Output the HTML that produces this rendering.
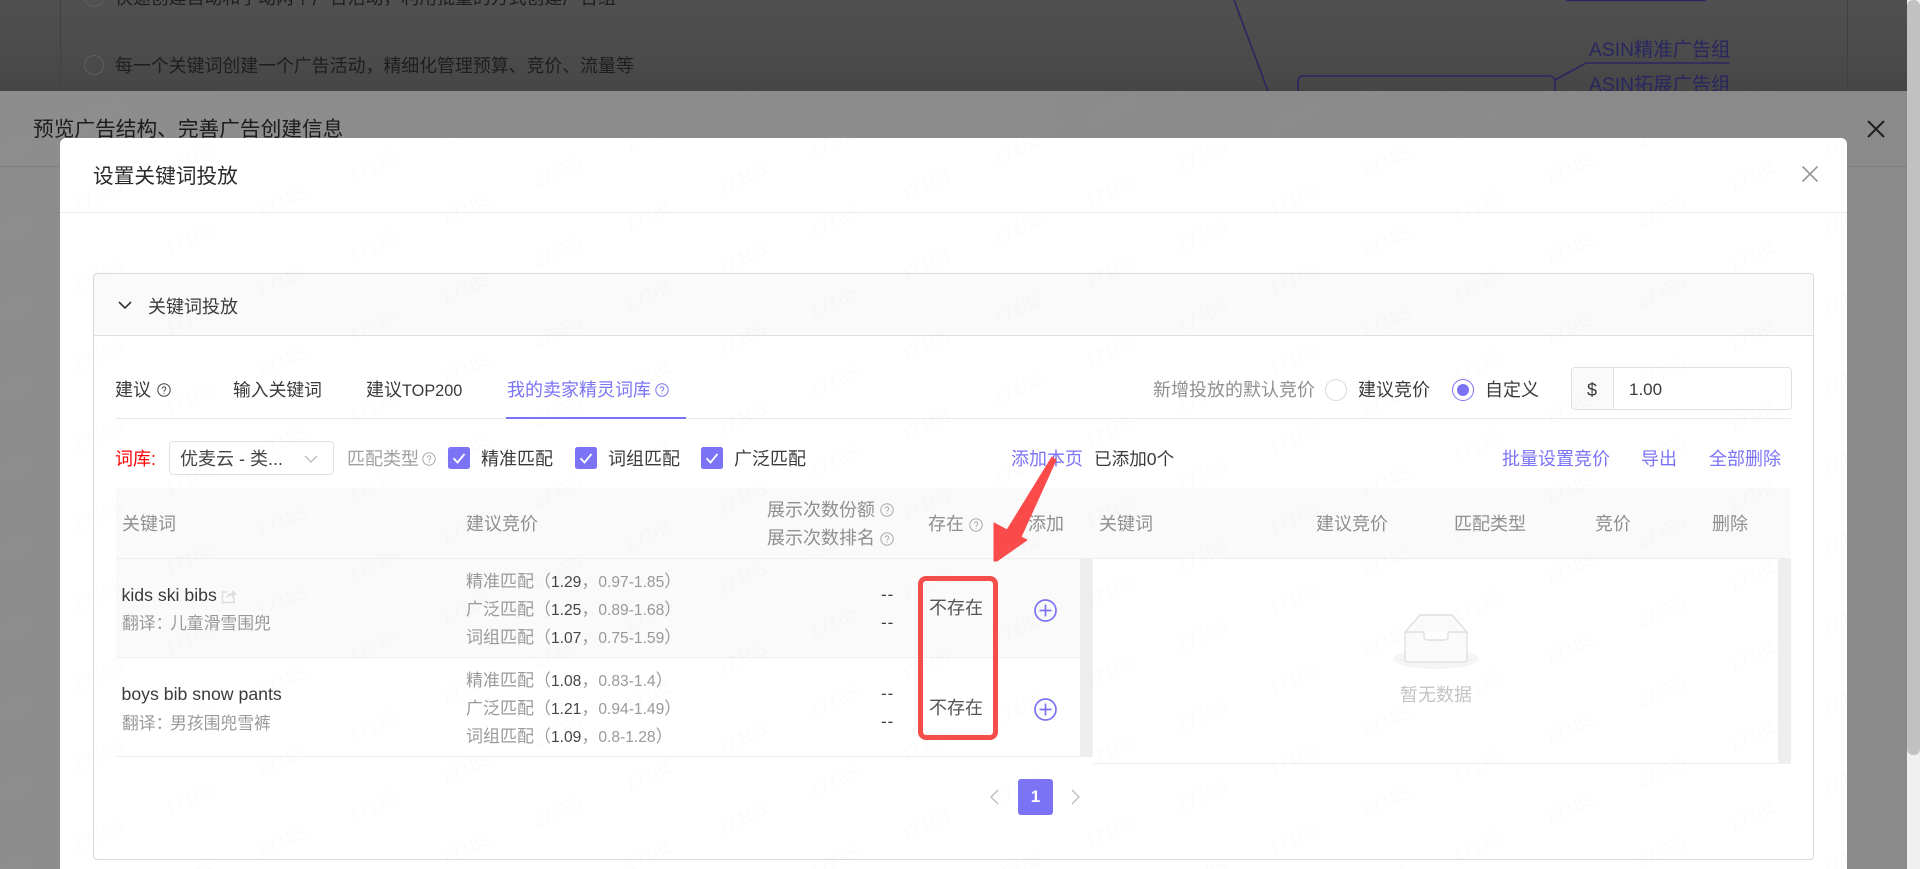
<!DOCTYPE html>
<html lang="zh-CN"><head><meta charset="utf-8"><title>设置关键词投放</title>
<style>
html,body{margin:0;padding:0;width:1920px;height:869px;overflow:hidden;background:#8b8b8b}
body{font-family:"Liberation Sans","Noto Sans CJK SC",sans-serif;position:relative}
.a{position:absolute}
.t{position:absolute;line-height:0;white-space:nowrap;font-size:18px;color:#3a3a3a}
.g{color:#8f8f8f}.p{color:#7b73f5}.s{font-size:17px}
.n{font-size:15.6px}.d{color:#444}.l{color:#999}
.tr{font-size:16.8px}.tr i{font-style:normal;letter-spacing:-2.3px}
svg{position:absolute;overflow:visible}
</style></head><body>
<!-- dark underlying page -->
<div class="a" style="left:0;top:0;width:1920px;height:91px;background:linear-gradient(#505050,#4a4a4a 70%,#464646);overflow:hidden">
  <div class="a" style="left:60px;top:0;width:1px;height:91px;background:#414141"></div>
  <div class="a" style="left:1847px;top:0;width:1px;height:91px;background:#404040"></div>
  <div class="a" style="left:84px;top:-13px;width:18px;height:18px;border:1px solid #5f5f5f;border-radius:50%"></div>
  <div class="t" style="left:115px;top:-2px;color:#1e1e1e;font-size:17.9px">快速创建自动和手动两个广告活动，利用批量的方式创建广告组</div>
  <div class="a" style="left:84px;top:55px;width:18px;height:18px;border:1px solid #5f5f5f;border-radius:50%"></div>
  <div class="t" style="left:115px;top:66px;color:#1e1e1e;font-size:17.9px">每一个关键词创建一个广告活动，精细化管理预算、竞价、流量等</div>
  <svg width="1920" height="91" style="left:0;top:0" fill="none" stroke="#2a2660" stroke-width="1.6">
    <path d="M1566 .5H1706M1234 0L1268 91M1298 91V82Q1298 76 1304 76H1549Q1555 76 1555 82V91M1555 80L1586 63H1730"/>
  </svg>
  <div class="t" style="left:1589px;top:51px;color:#2a2660;font-size:19.3px">ASIN精准广告组</div>
  <div class="t" style="left:1589px;top:86px;color:#2a2660;font-size:19.3px">ASIN拓展广告组</div>
</div>
<!-- panel -->
<div class="a" style="left:0;top:91px;width:1907px;height:778px;background:linear-gradient(90deg,#8d8d8d,#8a8a8a)"></div>
<div class="a" style="left:0;top:166px;width:1907px;height:1px;background:#7e7e7e"></div>
<div class="t" style="left:33px;top:130px;font-size:20.7px;color:#1c1c1c">预览广告结构、完善广告创建信息</div>
<svg width="18" height="18" style="left:1867px;top:120px" fill="none" stroke="#1e1e1e" stroke-width="2"><path d="M1 1L17 17M17 1L1 17"/></svg>
<!-- scrollbar -->
<div class="a" style="left:1907px;top:0;width:13px;height:869px;background:#f0f0f0"></div>
<div class="a" style="left:1907px;top:0;width:13px;height:755px;background:#c1c1c1;border-radius:6px"></div>
<!-- modal -->
<div class="a" style="left:60px;top:138px;width:1787px;height:731px;background:#fff;border-radius:6px 6px 0 0"></div>
<div class="a" style="left:60px;top:212px;width:1787px;height:1px;background:#ececec"></div>
<div class="t" style="left:93px;top:177px;font-size:20.7px;color:#2a2a2a">设置关键词投放</div>
<svg width="16" height="16" style="left:1802px;top:166px" fill="none" stroke="#999" stroke-width="1.6"><path d="M.5 .5L15.500 15.500M15.500 .5L.5 15.500"/></svg>
<!-- card -->
<div class="a" style="left:93px;top:273px;width:1719px;height:585px;border:1px solid #d9d9d9;border-radius:4px"></div>
<div class="a" style="left:94px;top:274px;width:1719px;height:61px;background:#fafafa;border-bottom:1px solid #e0e0e0;border-radius:4px 4px 0 0"></div>
<svg width="14" height="8" style="left:118px;top:301px" fill="none" stroke="#333" stroke-width="1.6"><path d="M1 1L7 7L13 1"/></svg>
<div class="t" style="left:148px;top:307px">关键词投放</div>
<svg width="0" height="0" style="left:0;top:0"><defs>
<symbol id="q" viewBox="0 0 14 14"><circle cx="7" cy="7" r="6.200" fill="none" stroke="currentColor" stroke-width="1"/><path d="M5.200 5.600a1.800 1.800 0 1 1 2.800 1.500c-.7.4-1 .7-1 1.500" fill="none" stroke="currentColor" stroke-width="1"/><path d="M6.500 9.700h1v1h-1z" fill="currentColor"/></symbol>
<symbol id="c" viewBox="0 0 22 22"><rect width="22" height="22" rx="2.500" fill="#7b73f5"/><path d="M5.500 11.200L9.500 15.500L16.500 7" fill="none" stroke="#fff" stroke-width="1.800"/></symbol>
<symbol id="m" viewBox="0 0 23 23"><circle cx="11.500" cy="11.500" r="10.500" fill="none" stroke="#7b73f5" stroke-width="1.700"/><path d="M11.500 5.500V17.500M5.500 11.500H17.500" fill="none" stroke="#7b73f5" stroke-width="1.700"/></symbol>
</defs></svg>
<!-- tabs -->
<div class="t" style="left:115px;top:390px">建议</div>
<svg width="14" height="14" style="left:157px;top:383px;color:#444"><use href="#q"/></svg>
<div class="t" style="left:233px;top:390px;font-size:17.800px">输入关键词</div>
<div class="t" style="left:366px;top:390px">建议<span style="font-size:16.300px">TOP200</span></div>
<div class="t p" style="left:507px;top:390px">我的卖家精灵词库</div>
<svg width="14" height="14" style="left:655px;top:383px;color:#7b73f5"><use href="#q"/></svg>
<div class="a" style="left:116px;top:418px;width:1675px;height:1px;background:#e8e8e8"></div>
<div class="a" style="left:506px;top:417px;width:180px;height:2px;background:#7b73f5"></div>
<div class="t g" style="left:1153px;top:390px">新增投放的默认竞价</div>
<div class="a" style="left:1325px;top:379px;width:20px;height:20px;border:1px solid #d9d9d9;border-radius:50%"></div>
<div class="t" style="left:1358px;top:390px">建议竞价</div>
<div class="a" style="left:1452px;top:379px;width:20px;height:20px;border:1px solid #7b73f5;border-radius:50%"></div>
<div class="a" style="left:1456px;top:383px;width:12px;height:12px;background:#7b73f5;border-radius:50%;margin:.5px"></div>
<div class="t" style="left:1485px;top:390px">自定义</div>
<div class="a" style="left:1571px;top:367px;width:219px;height:41px;border:1px solid #e0e0e0;border-radius:4px"></div>
<div class="a" style="left:1572px;top:368px;width:41px;height:41px;background:#fafafa;border-right:1px solid #e0e0e0;border-radius:4px 0 0 4px"></div>
<div class="t" style="left:1587px;top:390px">$</div>
<div class="t" style="left:1629px;top:390px;font-size:17px">1.00</div>
<!-- filter row -->
<div class="t" style="left:115px;top:459px;color:#f00">词库:</div>
<div class="a" style="left:169px;top:441px;width:163px;height:32px;border:1px solid #e0e0e0;border-radius:4px"></div>
<div class="t" style="left:180px;top:459px;color:#444">优麦云 - 类...</div>
<svg width="14" height="8" style="left:304px;top:455px" fill="none" stroke="#bbb" stroke-width="1.300"><path d="M1 1L7 7L13 1"/></svg>
<div class="t" style="left:347px;top:459px;color:#a0a0a0">匹配类型</div>
<svg width="14" height="14" style="left:422px;top:452px;color:#aaa"><use href="#q"/></svg>
<svg width="22" height="22" style="left:448px;top:447px"><use href="#c"/></svg>
<div class="t" style="left:481px;top:459px">精准匹配</div>
<svg width="22" height="22" style="left:575px;top:447px"><use href="#c"/></svg>
<div class="t" style="left:608px;top:459px">词组匹配</div>
<svg width="22" height="22" style="left:701px;top:447px"><use href="#c"/></svg>
<div class="t" style="left:734px;top:459px">广泛匹配</div>
<div class="t p" style="left:1011px;top:459px">添加本页</div>
<div class="t" style="left:1094px;top:459px;font-size:17.600px">已添加0个</div>
<div class="t p" style="left:1502px;top:459px">批量设置竞价</div>
<div class="t p" style="left:1641px;top:459px">导出</div>
<div class="t p" style="left:1709px;top:459px">全部删除</div>
<!-- table head -->
<div class="a" style="left:116px;top:488px;width:1675px;height:70px;background:#fafafa;border-bottom:1px solid #eee;border-radius:4px 4px 0 0"></div>
<div class="t g" style="left:122px;top:524px">关键词</div>
<div class="t g" style="left:466px;top:524px">建议竞价</div>
<div class="t g" style="left:767px;top:510px">展示次数份额</div>
<div class="t g" style="left:767px;top:538px">展示次数排名</div>
<svg width="14" height="14" style="left:880px;top:503px;color:#aaa"><use href="#q"/></svg>
<svg width="14" height="14" style="left:880px;top:532px;color:#aaa"><use href="#q"/></svg>
<div class="t g" style="left:928px;top:524px">存在</div>
<svg width="14" height="14" style="left:969px;top:518px;color:#aaa"><use href="#q"/></svg>
<div class="t g" style="left:1028px;top:524px">添加</div>
<div class="t g" style="left:1099px;top:524px">关键词</div>
<div class="t g" style="left:1316px;top:524px">建议竞价</div>
<div class="t g" style="left:1454px;top:524px">匹配类型</div>
<div class="t g" style="left:1595px;top:524px">竞价</div>
<div class="t g" style="left:1712px;top:524px">删除</div>
<!-- rows -->
<div class="a" style="left:116px;top:559px;width:964px;height:98px;background:#fafafa;border-bottom:1px solid #eee"></div>
<div class="a" style="left:116px;top:658px;width:964px;height:98px;border-bottom:1px solid #eee"></div>
<div class="a" style="left:1080px;top:558px;width:13px;height:199px;background:#eee;border-radius:2px"></div>
<div class="a" style="left:1093px;top:558px;width:685px;height:205px;border-bottom:1px solid #eee"></div>
<div class="a" style="left:1778px;top:558px;width:13px;height:206px;background:#eee;border-radius:2px"></div>

<div class="t" style="left:121.500px;top:595px;font-size:17.700px">kids ski bibs</div>
<svg width="16" height="16" style="left:221px;top:588px" fill="none" stroke="#ddd" stroke-width="1.500"><path d="M6 4H1.500V14.500H13V9"/><path d="M5 10C6 6 9 5 11 5V2L15.500 6L11 10V7.500C9 7.500 7 8 5 10Z" fill="#ddd" stroke="none"/></svg>
<div class="t tr l" style="left:122px;top:624px">翻译<i>：</i>儿童滑雪围兜</div>
<div class="t s l" style="left:466px;top:582px">精准匹配（<span class="n d">1.29</span>，<span class="n">0.97-1.85</span>）</div>
<div class="t s l" style="left:466px;top:610px">广泛匹配（<span class="n d">1.25</span>，<span class="n">0.89-1.68</span>）</div>
<div class="t s l" style="left:466px;top:638px">词组匹配（<span class="n d">1.07</span>，<span class="n">0.75-1.59</span>）</div>
<div class="t" style="left:881px;top:595px;font-size:17px;letter-spacing:1px">--</div>
<div class="t" style="left:881px;top:623px;font-size:17px;letter-spacing:1px">--</div>
<div class="t" style="left:929px;top:608px;color:#555">不存在</div>
<svg width="23" height="23" style="left:1034px;top:599px"><use href="#m"/></svg>

<div class="t" style="left:121.500px;top:694px;font-size:17.700px">boys bib snow pants</div>
<div class="t tr l" style="left:122px;top:724px">翻译<i>：</i>男孩围兜雪裤</div>
<div class="t s l" style="left:466px;top:681px">精准匹配（<span class="n d">1.08</span>，<span class="n">0.83-1.4</span>）</div>
<div class="t s l" style="left:466px;top:709px">广泛匹配（<span class="n d">1.21</span>，<span class="n">0.94-1.49</span>）</div>
<div class="t s l" style="left:466px;top:737px">词组匹配（<span class="n d">1.09</span>，<span class="n">0.8-1.28</span>）</div>
<div class="t" style="left:881px;top:694px;font-size:17px;letter-spacing:1px">--</div>
<div class="t" style="left:881px;top:722px;font-size:17px;letter-spacing:1px">--</div>
<div class="t" style="left:929px;top:708px;color:#555">不存在</div>
<svg width="23" height="23" style="left:1034px;top:698px"><use href="#m"/></svg>
<!-- empty -->
<svg width="90" height="60" style="left:1391px;top:612px">
  <ellipse cx="45" cy="47" rx="43" ry="10" fill="#f5f5f5"/>
  <path d="M14 20L29 3H61L76 20V47Q76 50 73 50H17Q14 50 14 47Z" fill="#fafafa" stroke="#e0e0e0" stroke-width="1.400"/>
  <path d="M14 20H32Q33 20 33 22V24Q33 28 37 28H53Q57 28 57 24V22Q57 20 58 20H76" fill="#fff" stroke="#e0e0e0" stroke-width="1.400"/>
</svg>
<div class="t" style="left:1400px;top:695px;color:#c4c4c4">暂无数据</div>
<!-- pagination -->
<svg width="10" height="16" style="left:989px;top:789px" fill="none" stroke="#bbb" stroke-width="1.300"><path d="M9 1L2 8L9 15"/></svg>
<div class="a" style="left:1018px;top:779px;width:35px;height:36px;background:#7b73f5;border-radius:3px;color:#fff;font-weight:bold;font-size:17px;line-height:36px;text-align:center">1</div>
<svg width="10" height="16" style="left:1071px;top:789px" fill="none" stroke="#bbb" stroke-width="1.300"><path d="M1 1L8 8L1 15"/></svg>
<!-- annotation -->
<div class="a" style="left:918px;top:576px;width:70px;height:154px;border:5px solid #f44d4a;border-radius:8px"></div>
<svg width="1920" height="869" style="left:0;top:0">
  <polygon points="1052,457 1056,460 1021,537 1027,540 997,561 994,561 994,523 1007,530" fill="#fa4b4a" stroke="#fa4b4a" stroke-width="1" stroke-linejoin="round"/>
</svg>
<!-- watermark -->
<svg width="1920" height="778" viewBox="0 91 1920 778" style="left:0;top:91px;pointer-events:none">
  <defs><pattern id="w" width="184" height="80" patternUnits="userSpaceOnUse" patternTransform="matrix(1 .03623 0 1 972 128.330)">
    <text x="46" y="20" font-family="Liberation Sans,sans-serif" font-style="italic" font-size="19" fill="#aaa" fill-opacity=".05" text-anchor="middle" dominant-baseline="middle" transform="rotate(-27 46 20)">17185</text>
    <text x="138" y="60" font-family="Liberation Sans,sans-serif" font-style="italic" font-size="19" fill="#aaa" fill-opacity=".05" text-anchor="middle" dominant-baseline="middle" transform="rotate(-27 138 60)">17185</text>
  </pattern></defs>
  <rect x="0" y="91" width="1907" height="778" fill="url(#w)"/>
</svg>
</body></html>
